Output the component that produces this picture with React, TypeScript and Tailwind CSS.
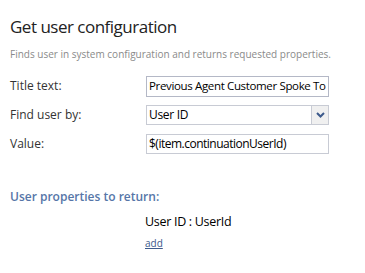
import React from "react";

export default function App() {
  return (
    <div className="w-[365px] h-[273px] bg-white text-[#333] font-['Open_Sans','Noto_Sans',sans-serif]">
      <div className="pl-[10px] pt-[15px]">
        <h1 className="text-[17px] leading-[24px] tracking-[-0.5px] text-[#222] font-normal">Get user configuration</h1>
        <p className="mt-[8px] text-[10px] leading-[14px] text-[#8a8a8a]">
          Finds user in system configuration and returns requested properties.
        </p>
      </div>
      <div className="mt-[15px] pl-[10px] flex flex-col gap-[9px]">
        <div className="flex items-center h-[20px]">
          <label className="w-[136px] text-[12px] text-[#333]">Title text:</label>
          <div className="w-[183px] h-[21px] border border-[#b4b8c6] flex items-center px-[2px] text-[11.5px] tracking-[-0.35px] text-black whitespace-nowrap overflow-hidden">
            Previous Agent Customer Spoke To
          </div>
        </div>
        <div className="flex items-center h-[20px]">
          <label className="w-[136px] text-[12px] text-[#333]">Find user by:</label>
          <div className="w-[183px] h-[20px] border border-[#c8cbd4] flex items-stretch text-[12px] tracking-[-0.3px] text-black">
            <div className="flex-1 flex items-center px-[2px]">User ID</div>
            <div className="w-[17px] border-l border-[#c8cbd4] bg-[#f0f0f0] flex items-center justify-center">
              <svg width="9" height="6" viewBox="0 0 9 6">
                <path d="M1 1 L4.5 4.5 L8 1" stroke="#3d5a8c" strokeWidth="2" fill="none" />
              </svg>
            </div>
          </div>
        </div>
        <div className="flex items-center h-[20px]">
          <label className="w-[136px] text-[12px] text-[#333]">Value:</label>
          <div className="w-[183px] h-[20px] border border-[#c8cbd4] flex items-center px-[2px] text-[12px] tracking-[-0.5px] text-black whitespace-nowrap overflow-hidden">
            $(item.continuationUserId)
          </div>
        </div>
      </div>
      <div className="pl-[10px] mt-[35px]">
        <div className="text-[12px] leading-[16px] font-semibold text-[#5676a8]">User properties to return:</div>
        <div className="pl-[135px] mt-[8px] text-[12.5px] leading-[18px] tracking-[-0.3px] text-black">User ID : UserId</div>
        <div className="pl-[135px] mt-[3px] leading-[14px]">
          <a className="text-[10px] text-[#3d5a8c] underline">add</a>
        </div>
      </div>
    </div>
  );
}
